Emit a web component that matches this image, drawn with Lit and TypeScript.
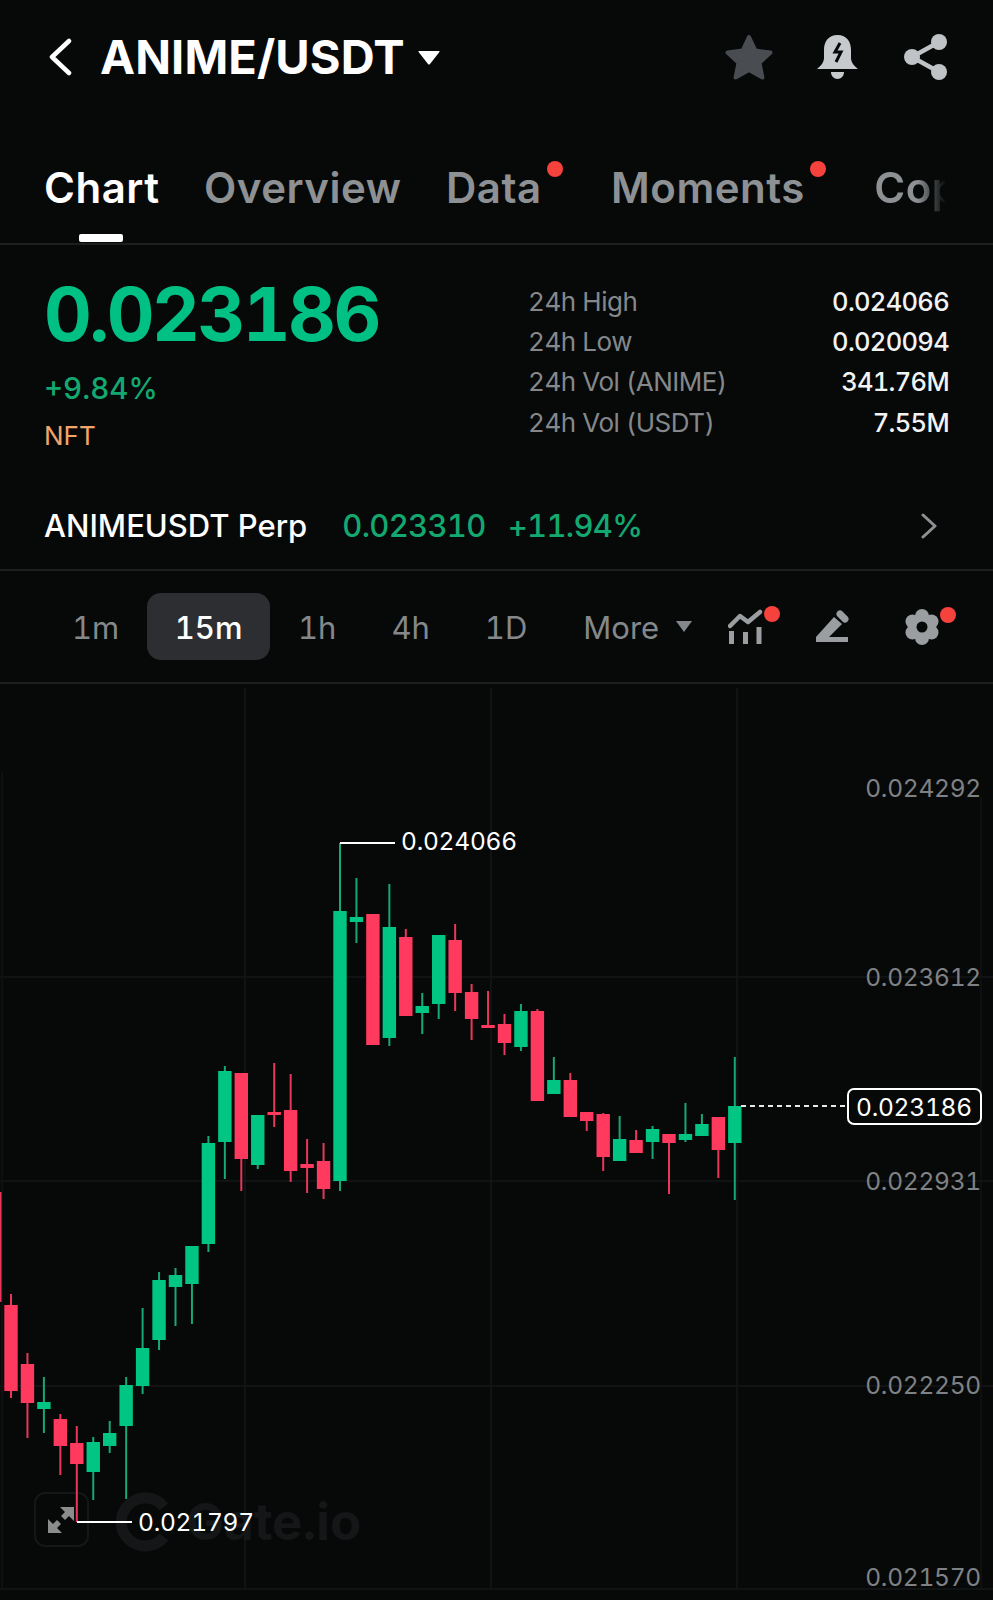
import { LitElement, html, svg, css } from 'lit';
import { customElement } from 'lit/decorators.js';

// [high, body top, body bottom, low, up?]
const CANDLES: [number, number, number, number, boolean][] = [
	[1294, 1305, 1391, 1398, false],
	[1353, 1364, 1403, 1438, false],
	[1377, 1402, 1409, 1433, true],
	[1414, 1419, 1446, 1475, false],
	[1426, 1443, 1464, 1522, false],
	[1437, 1442, 1472, 1500, true],
	[1421, 1433, 1446, 1453, true],
	[1377, 1385, 1426, 1499, true],
	[1308, 1348, 1386, 1394, true],
	[1272, 1280, 1340, 1350, true],
	[1268, 1275, 1287, 1326, true],
	[1246, 1246, 1284, 1324, true],
	[1136, 1143, 1244, 1252, true],
	[1066, 1071, 1142, 1179, true],
	[1073, 1073, 1159, 1191, false],
	[1115, 1115, 1165, 1169, true],
	[1063, 1112, 1115, 1127, false],
	[1074, 1110, 1171, 1182, false],
	[1139, 1164, 1168, 1193, false],
	[1143, 1161, 1189, 1199, false],
	[843, 911, 1181, 1191, true],
	[878, 917, 922, 943, true],
	[914, 914, 1045, 1045, false],
	[884, 927, 1038, 1046, true],
	[929, 937, 1016, 1016, false],
	[993, 1006, 1013, 1034, true],
	[935, 935, 1004, 1019, true],
	[924, 940, 993, 1011, false],
	[984, 992, 1019, 1040, false],
	[991, 1025, 1028, 1028, false],
	[1014, 1024, 1043, 1055, false],
	[1004, 1011, 1047, 1051, true],
	[1009, 1011, 1101, 1101, false],
	[1057, 1080, 1094, 1094, true],
	[1073, 1080, 1117, 1117, false],
	[1112, 1112, 1121, 1131, false],
	[1113, 1114, 1157, 1171, false],
	[1116, 1139, 1161, 1161, true],
	[1130, 1140, 1153, 1153, false],
	[1126, 1129, 1142, 1159, true],
	[1134, 1134, 1143, 1194, false],
	[1103, 1134, 1140, 1142, true],
	[1114, 1124, 1136, 1136, true],
	[1117, 1117, 1150, 1178, false],
	[1057, 1106, 1143, 1200, true],
];

const AXIS: [string, number][] = [
	['0.024292', 788],
	['0.023612', 977],
	['0.022931', 1181],
	['0.022250', 1385],
	['0.021570', 1577],
];

const STATS = [
	['24h High', '0.024066'],
	['24h Low', '0.020094'],
	['24h Vol (ANIME)', '341.76M'],
	['24h Vol (USDT)', '7.55M'],
];

@customElement('app-root')
export class AppRoot extends LitElement {
	static styles = css`
		:host {
			display: block;
			width: 993px;
			height: 1600px;
			overflow: hidden;
			background: #070909;
			color: #fff;
			font-family: Inter, 'Liberation Sans', sans-serif;
			font-variant-numeric: tabular-nums;
		}

		.header {
			display: flex;
			align-items: center;
			height: 113px;
			padding: 0 45px 0 48px;
		}
		.back {
			width: 24px;
			height: 38px;
			margin-right: 28px;
		}
		.title {
			font-size: 47px;
			font-weight: 700;
			letter-spacing: 0.1px;
		}
		.caret {
			width: 22px;
			height: 14px;
			margin-left: 13px;
			margin-top: 2px;
		}
		.header-icons {
			display: flex;
			align-items: center;
			gap: 44px;
			margin-left: auto;
		}
		.bell {
			margin-right: 1px;
		}

		.tabs {
			display: flex;
			align-items: flex-start;
			gap: 44.5px;
			height: 132px;
			padding: 50px 0 0 44px;
			box-sizing: border-box;
			border-bottom: 2px solid #1c1e20;
		}
		.tab {
			position: relative;
			font-size: 42px;
			line-height: 50px;
			font-weight: 600;
			letter-spacing: 0.5px;
			color: #8e9194;
			white-space: nowrap;
		}
		.tab.on {
			color: #fff;
		}
		.tab.on::after {
			content: '';
			position: absolute;
			left: 35px;
			top: 71px;
			width: 44px;
			height: 8px;
			border-radius: 2px;
			background: #fff;
		}
		.tab.dotted {
			margin-right: 25px;
		}
		.tab.cut {
			width: 72px;
			overflow: hidden;
			-webkit-mask-image: linear-gradient(to right, #000 60%, transparent);
			mask-image: linear-gradient(to right, #000 60%, transparent);
		}
		.dot {
			position: absolute;
			width: 16px;
			height: 16px;
			border-radius: 50%;
			background: #f6423c;
		}
		.tab .dot {
			right: -21px;
			top: -2px;
		}

		.summary {
			display: flex;
			justify-content: space-between;
			padding: 0 44px 0 44px;
			height: 214px;
		}
		.price {
			font-size: 74px;
			line-height: 90px;
			font-weight: 700;
			letter-spacing: -2.5px;
			color: #00c083;
			margin-top: 24px;
		}
		.change {
			font-size: 29.5px;
			line-height: 36px;
			font-weight: 500;
			color: #14a871;
			margin-top: 11px;
		}
		.tag {
			font-size: 26px;
			line-height: 30px;
			color: #f2a46a;
			margin-top: 15px;
		}
		.stats {
			display: grid;
			grid-template-columns: 1fr auto;
			width: 421px;
			grid-auto-rows: 40.4px;
			margin-top: 36px;
			font-size: 26px;
			align-items: center;
		}
		.stat-label {
			color: #85888b;
			letter-spacing: -0.45px;
		}
		.stat-value {
			text-align: right;
			font-weight: 500;
			font-size: 25.5px;
			letter-spacing: -0.7px;
			color: #f2f3f3;
		}

		.perp {
			display: flex;
			align-items: center;
			height: 112px;
			padding: 23px 55px 0 44px;
			box-sizing: border-box;
			border-bottom: 2px solid #1c1e20;
			font-size: 31px;
			font-weight: 500;
		}
		.perp-name {
			margin-right: 35px;
		}
		.perp-num {
			color: #14a871;
			letter-spacing: -0.7px;
			margin-right: 22px;
		}
		.perp svg {
			margin-left: auto;
		}

		.frames {
			display: flex;
			align-items: center;
			height: 113px;
			padding: 0 54px 0 44.5px;
			box-sizing: border-box;
			border-bottom: 2px solid #1c1e20;
			font-size: 31px;
			color: #85888b;
		}
		.frame {
			padding: 0 27.5px;
			height: 67px;
			line-height: 69px;
			border-radius: 14px;
			white-space: nowrap;
		}
		.frame.on {
			padding: 0 28px;
			background: #2c2e32;
			color: #fff;
			font-weight: 500;
		}
		.frame.more {
			margin-left: 1px;
		}
		.more-caret {
			width: 16px;
			height: 11px;
			margin-left: -10.5px;
		}
		.tools {
			display: flex;
			align-items: center;
			margin-left: auto;
		}
		.tool {
			position: relative;
			display: flex;
		}
		.tool.pencil {
			margin-left: 53px;
		}
		.tool.gear {
			margin-left: 55px;
		}
		.tool .dot {
			right: -17px;
			top: -3px;
		}
		.tool.gear .dot {
			top: -1px;
		}

		.chart {
			display: block;
			width: 993px;
			height: 916px;
		}
		.grid {
			stroke: #141618;
			stroke-width: 1.5;
		}
		.frame-line {
			stroke: #101213;
			stroke-width: 1.5;
		}
		.wick {
			stroke-width: 2;
		}
		.up {
			fill: #00c583;
			stroke: none;
		}
		.down {
			fill: #ff3a5e;
			stroke: none;
		}
		.up-w {
			stroke: #17a877;
		}
		.down-w {
			stroke: #e9365a;
		}
		.axis {
			fill: #7f8285;
			font-size: 24.5px;
			letter-spacing: -0.25px;
			text-anchor: end;
		}
		.mark {
			fill: #fff;
			font-size: 24.5px;
			letter-spacing: -0.25px;
		}
		.mark-line {
			stroke: #fff;
			stroke-width: 2;
			fill: none;
		}
		.last-box {
			fill: #070909;
			stroke: #fff;
			stroke-width: 2;
		}
		.dash {
			stroke: #e8e8e8;
			stroke-width: 2;
			stroke-dasharray: 5 4;
		}
		.wm {
			fill: #141618;
			font-size: 51px;
			font-weight: 700;
		}
		.wm-logo {
			fill: none;
			stroke: #141618;
			stroke-width: 11;
		}
		.expand-box {
			fill: none;
			stroke: #141618;
			stroke-width: 2;
		}
	`;

	private candle(c: [number, number, number, number, boolean], i: number) {
		const x = 11 + 16.45 * i;
		const [hi, top, bottom, lo, up] = c;
		return svg`
			<line class="wick ${up ? 'up-w' : 'down-w'}" x1=${x} x2=${x} y1=${hi} y2=${lo}></line>
			<rect class=${up ? 'up' : 'down'} x=${x - 6.7} y=${top} width="13.4" height=${bottom - top}></rect>
		`;
	}

	private renderChart() {
		return html`
			<svg class="chart" viewBox="0 684 993 916">
				${[977, 1181, 1386, 1589].map((y) => svg`<line class="grid" x1="0" x2="993" y1=${y} y2=${y}></line>`)}
				${[245, 491, 737].map((x) => svg`<line class="grid" x1=${x} x2=${x} y1="688" y2="1589"></line>`)}
				<line class="frame-line" x1="2" x2="2" y1="773" y2="1589"></line>
				<line class="frame-line" x1="981" x2="981" y1="797" y2="1589"></line>

				<path class="wm-logo" d="M164 1507 A24 24 0 1 0 164 1537"></path>
				<text class="wm" x="186" y="1540">Gate.io</text>
				<rect class="expand-box" x="35" y="1493" width="53" height="53" rx="10"></rect>
				<path fill="#8c8c8c" d="M60 1507h14v14l-5-5-4 4-4-4 4-4zM48 1519l5 5 4-4 4 4-4 4 5 5H48z"></path>

				<line class="wick down-w" x1="0.5" x2="0.5" y1="1192" y2="1302"></line>
				${CANDLES.map((c, i) => this.candle(c, i))}

				<path class="mark-line" d="M340 843H395"></path>
				<text class="mark" x="401" y="850">0.024066</text>
				<path class="mark-line" d="M77 1522H132"></path>
				<text class="mark" x="138" y="1531">0.021797</text>

				<line class="dash" x1="741" x2="848" y1="1106" y2="1106"></line>
				<rect class="last-box" x="848" y="1089" width="133" height="35" rx="6"></rect>
				<text class="mark" x="856" y="1116">0.023186</text>

				${AXIS.map(([t, y]) => svg`<text class="axis" x="981" y=${y + 9}>${t}</text>`)}
			</svg>
		`;
	}

	render() {
		return html`
			<div class="header">
				<svg class="back" viewBox="0 0 24 38" fill="none" stroke="#fff" stroke-width="4.5" stroke-linecap="round" stroke-linejoin="round">
					<path d="M21 3 4 19l17 16"></path>
				</svg>
				<span class="title">ANIME/USDT</span>
				<svg class="caret" viewBox="0 0 22 14"><path fill="#fff" d="M1 0h20q1 0 .4 1L12 13q-1 1-2 0L.6 1Q0 0 1 0z"></path></svg>
				<div class="header-icons">
					<svg width="48" height="46" viewBox="0 0 48 46">
						<path fill="#494c51" stroke="#494c51" stroke-width="4" stroke-linejoin="round" d="M24 3l6.4 13.6 15.1 1.9-11 10.300 2.900 14.700L24 36l-13.400 7.500 2.900-14.700-11-10.300 15.100-1.900z"></path>
					</svg>
					<svg class="bell" width="42" height="46" viewBox="0 0 42 46">
						<path fill="#c7cacc" d="M20.500 1C11 1 7 8 7 16v8c0 4-3 8-7 11h41c-4-3-7-7-7-11v-8c0-8-4-15-13.500-15z"></path>
						<path fill="#c7cacc" d="M14 38h13c0 4-3 7-6.500 7S14 42 14 38z"></path>
						<path fill="none" stroke="#070909" stroke-width="3" d="M23 9l-5 9h6l-5 10"></path>
					</svg>
					<svg width="44" height="46" viewBox="0 0 44 46">
						<path fill="none" stroke="#c0c3c5" stroke-width="4.500" d="M35 8 8 23l27 15"></path>
						<circle cx="35" cy="8" r="8" fill="#c0c3c5"></circle>
						<circle cx="8" cy="23" r="8" fill="#c0c3c5"></circle>
						<circle cx="35" cy="38" r="8" fill="#c0c3c5"></circle>
					</svg>
				</div>
			</div>

			<div class="tabs">
				<div class="tab on">Chart</div>
				<div class="tab">Overview</div>
				<div class="tab dotted">Data<span class="dot"></span></div>
				<div class="tab dotted">Moments<span class="dot"></span></div>
				<div class="tab cut">Copy Trading</div>
			</div>

			<div class="summary">
				<div>
					<div class="price">0.023186</div>
					<div class="change">+9.84%</div>
					<div class="tag">NFT</div>
				</div>
				<div class="stats">
					${STATS.map(([k, v]) => html`<span class="stat-label">${k}</span><span class="stat-value">${v}</span>`)}
				</div>
			</div>

			<div class="perp">
				<span class="perp-name">ANIMEUSDT Perp</span>
				<span class="perp-num">0.023310</span>
				<span class="perp-num">+11.94%</span>
				<svg width="18" height="26" viewBox="0 0 18 26" fill="none" stroke="#8e9194" stroke-width="3" stroke-linecap="round" stroke-linejoin="round">
					<path d="M3 2l12 11L3 24"></path>
				</svg>
			</div>

			<div class="frames">
				<span class="frame">1m</span>
				<span class="frame on">15m</span>
				<span class="frame">1h</span>
				<span class="frame">4h</span>
				<span class="frame">1D</span>
				<span class="frame more">More</span>
				<svg class="more-caret" viewBox="0 0 16 11"><path fill="#85888b" d="M0 0h16L8 11z"></path></svg>
				<div class="tools">
					<div class="tool">
						<svg width="35" height="36" viewBox="0 0 35 36" fill="none" stroke="#9b9ea1" stroke-width="4.500" stroke-linecap="round" stroke-linejoin="round">
							<path d="M2 17l10-10 8 6 12-10"></path>
							<path stroke-linecap="butt" stroke-width="5" d="M3.500 22v13M17.500 23v12M31 18v17"></path>
						</svg>
						<span class="dot"></span>
					</div>
					<div class="tool pencil">
						<svg width="34" height="34" viewBox="0 0 34 34" fill="#9b9ea1">
							<path d="M0 27 18 7l8 7-13 13h19v5H0z"></path>
							<path stroke="#9b9ea1" stroke-width="7" stroke-linecap="round" d="M24 4l5 5"></path>
						</svg>
					</div>
					<div class="tool gear">
						<svg width="34" height="38" viewBox="0 0 34 38">
							<g fill="#9b9ea1">
								<circle cx="17" cy="19" r="12"></circle>
								<circle cx="17" cy="8" r="7"></circle>
								<circle cx="17" cy="30" r="7"></circle>
								<circle cx="7.500" cy="13.500" r="7"></circle>
								<circle cx="26.500" cy="13.500" r="7"></circle>
								<circle cx="7.500" cy="24.500" r="7"></circle>
								<circle cx="26.500" cy="24.500" r="7"></circle>
							</g>
							<circle cx="17" cy="19" r="5.500" fill="#070909"></circle>
						</svg>
						<span class="dot"></span>
					</div>
				</div>
			</div>

			${this.renderChart()}
		`;
	}
}
